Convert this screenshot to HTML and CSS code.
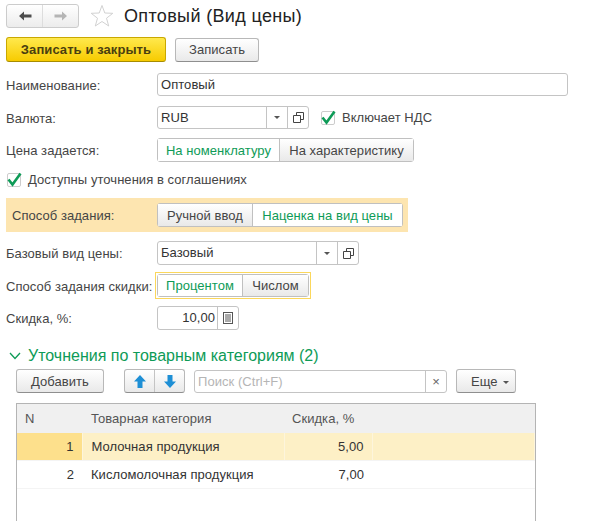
FILE: index.html
```html
<!DOCTYPE html>
<html lang="ru">
<head>
    <meta charset="UTF-8">
    <title>Оптовый (Вид цены)</title>
    <link rel="stylesheet" href="styles.css">
</head>
<body>

    <!-- Заголовок -->
    <header class="title-bar">
        <div class="nav-buttons">
            <button class="nav-btn">
                <svg width="14" height="10" viewBox="0 0 14 10"><path d="M6 0.5 L1 5 L6 9.5 V6.5 H13.5 V3.5 H6 Z" fill="#4d4d4d"/></svg>
            </button>
            <button class="nav-btn">
                <svg width="14" height="10" viewBox="0 0 14 10"><path d="M8 0.5 L13 5 L8 9.5 V6.5 H0.5 V3.5 H8 Z" fill="#b5b5b5"/></svg>
            </button>
        </div>
        <svg class="star" width="24" height="24" viewBox="0 0 24 24"><path d="M12 1.5 L14.8 9 L22.8 9.3 L16.5 14.2 L18.7 22 L12 17.5 L5.3 22 L7.5 14.2 L1.2 9.3 L9.2 9 Z" fill="#fff" stroke="#d2d2d2"/></svg>
        <h1>Оптовый (Вид цены)</h1>
    </header>

    <div class="command-bar">
        <button class="btn btn-primary">Записать и закрыть</button>
        <button class="btn btn-save">Записать</button>
    </div>

    <!-- Реквизиты -->
    <div class="row row-name">
        <label class="label">Наименование:</label>
        <div class="field field-name"><span class="field-text">Оптовый</span></div>
    </div>

    <div class="row row-currency">
        <label class="label">Валюта:</label>
        <div class="field field-currency">
            <span class="field-text">RUB</span>
            <span class="field-btn"><i class="caret"></i></span>
            <span class="field-btn">
                <svg width="11" height="11" viewBox="0 0 11 11"><path d="M3.5 3.5 V0.5 H10.5 V7.5 H7.5 M0.5 3.5 H7.5 V10.5 H0.5 Z" fill="none" stroke="#444"/></svg>
            </span>
        </div>
        <span class="check check-vat">
            <svg width="16" height="16" viewBox="0 0 16 16"><path d="M2.5 7.5 L6.5 12.5 L14.5 1.5" fill="none" stroke="#0e9b57" stroke-width="2.6"/></svg>
        </span>
        <span class="check-label">Включает НДС</span>
    </div>

    <div class="row row-price">
        <label class="label">Цена задается:</label>
        <div class="tumbler">
            <span class="tumbler-item active item-nom">На номенклатуру</span>
            <span class="tumbler-item item-char">На характеристику</span>
        </div>
    </div>

    <div class="row row-refine">
        <span class="check check-refine">
            <svg width="16" height="16" viewBox="0 0 16 16"><path d="M2.5 7.5 L6.5 12.5 L14.5 1.5" fill="none" stroke="#0e9b57" stroke-width="2.6"/></svg>
        </span>
        <span class="check-label">Доступны уточнения в соглашениях</span>
    </div>

    <div class="row row-method">
        <label class="label label-method">Способ задания:</label>
        <div class="tumbler">
            <span class="tumbler-item item-manual">Ручной ввод</span>
            <span class="tumbler-item active item-markup">Наценка на вид цены</span>
        </div>
    </div>

    <div class="row row-base">
        <label class="label">Базовый вид цены:</label>
        <div class="field field-base">
            <span class="field-text">Базовый</span>
            <span class="field-btn"><i class="caret"></i></span>
            <span class="field-btn">
                <svg width="11" height="11" viewBox="0 0 11 11"><path d="M3.5 3.5 V0.5 H10.5 V7.5 H7.5 M0.5 3.5 H7.5 V10.5 H0.5 Z" fill="none" stroke="#444"/></svg>
            </span>
        </div>
    </div>

    <div class="row row-discount-type">
        <label class="label">Способ задания скидки:</label>
        <div class="focus-frame">
            <div class="tumbler tumbler-small">
                <span class="tumbler-item active item-percent">Процентом</span>
                <span class="tumbler-item item-number">Числом</span>
            </div>
        </div>
    </div>

    <div class="row row-discount">
        <label class="label">Скидка, %:</label>
        <div class="field field-discount">
            <span class="field-text field-number">10,00</span>
            <span class="field-btn">
                <svg width="10" height="12" viewBox="0 0 10 12"><rect x="0.5" y="0.5" width="9" height="11" fill="#fff" stroke="#555"/><path d="M2 3 H8 M2 5 H8 M2 7 H8 M2 9 H8" stroke="#555"/></svg>
            </span>
        </div>
    </div>

    <!-- Уточнения -->
    <div class="group-title">
        <svg width="12" height="8" viewBox="0 0 12 8"><path d="M1 1 L6 6.5 L11 1" fill="none" stroke="#0e9b57" stroke-width="1.3"/></svg>
        <span>Уточнения по товарным категориям (2)</span>
    </div>

    <div class="table-bar">
        <button class="btn btn-add">Добавить</button>
        <div class="arrows">
            <button class="arrow-btn">
                <svg width="12" height="13" viewBox="0 0 12 13"><path d="M6 0 L12 6.5 H8.5 V13 H3.5 V6.5 H0 Z" fill="#1e8fd5"/></svg>
            </button>
            <button class="arrow-btn">
                <svg width="12" height="13" viewBox="0 0 12 13"><path d="M6 13 L12 6.5 H8.5 V0 H3.5 V6.5 H0 Z" fill="#1e8fd5"/></svg>
            </button>
        </div>
        <div class="search">
            <span class="search-text">Поиск (Ctrl+F)</span>
            <span class="search-clear">×</span>
        </div>
        <button class="btn btn-more">Еще <i class="caret"></i></button>
    </div>

    <div class="table-wrap">
        <table class="grid">
            <thead>
                <tr>
                    <th class="col-n">N</th>
                    <th class="col-cat">Товарная категория</th>
                    <th class="col-disc">Скидка, %</th>
                    <th></th>
                </tr>
            </thead>
            <tbody>
                <tr class="current">
                    <td class="num cell-mark">1</td>
                    <td class="cell-cat">Молочная продукция</td>
                    <td class="num">5,00</td>
                    <td></td>
                </tr>
                <tr>
                    <td class="num">2</td>
                    <td class="cell-cat">Кисломолочная продукция</td>
                    <td class="num">7,00</td>
                    <td></td>
                </tr>
            </tbody>
        </table>
    </div>

</body>
</html>
```

FILE: styles.css
```css
html, body {
    height: 521px;
    overflow: hidden;
}

body {
    font-family: 'Liberation Sans', Arial, sans-serif;
    font-size: 13px;
    letter-spacing: 0.05px;
    color: #454545;
    background-color: #fff;
    margin: 0;
    padding: 4px 0 0 6px;
    box-sizing: border-box;
}

button {
    font: inherit;
    letter-spacing: inherit;
    color: inherit;
    padding: 0;
}

/* Заголовок */
.title-bar {
    display: flex;
    align-items: center;
    height: 24px;
}

.title-bar h1 {
    margin: 0 0 0 10px;
    font-size: 18px;
    font-weight: normal;
    letter-spacing: 0.35px;
    color: #222;
}

.star {
    margin-left: 11px;
}

.nav-buttons {
    display: flex;
    width: 73px;
    height: 24px;
    box-sizing: border-box;
    border: 1px solid #ccc;
    border-radius: 3px;
    background: linear-gradient(#fff, #ececec);
}

.nav-btn {
    flex: 1;
    border: 0;
    background: none;
    display: flex;
    align-items: center;
    justify-content: center;
}

.nav-btn + .nav-btn {
    border-left: 1px solid #ddd;
}

/* Кнопки */
.btn {
    box-sizing: border-box;
    height: 24px;
    border: 1px solid #b8b8b8;
    border-bottom-color: #8f8f8f;
    border-radius: 3px;
    background: linear-gradient(#fff, #e9e9e9);
}

.command-bar {
    display: flex;
    align-items: center;
    gap: 9px;
    margin-top: 9px;
    height: 25px;
}

.btn-primary {
    width: 160px;
    height: 25px;
    font-weight: bold;
    letter-spacing: 0.08px;
    color: #4a3f10;
    border-color: #c9a800;
    border-bottom-color: #a78c00;
    background: linear-gradient(#ffe94d, #f7cb00);
}

.btn-save {
    width: 84px;
}

/* Строки формы */
.row {
    display: flex;
    align-items: center;
}

.label {
    width: 151px;
    flex-shrink: 0;
    padding-top: 1px;
}

.row-name {
    margin-top: 11px;
    height: 23px;
}

.row-currency {
    margin-top: 10px;
    height: 23px;
}

.row-price {
    margin-top: 9px;
    height: 24px;
}

.row-refine {
    margin-top: 10px;
    height: 15px;
    padding-left: 1px;
}

.row-method {
    margin-top: 11px;
    height: 34px;
    width: 402px;
    background-color: #fde5b0;
}

.label-method {
    padding-left: 6px;
    box-sizing: border-box;
}

.row-base {
    margin-top: 9px;
    height: 24px;
}

.row-discount-type {
    margin-top: 7px;
    height: 27px;
}

.row-discount {
    margin-top: 7px;
    height: 24px;
}

.label,
.check-label {
    white-space: nowrap;
}

/* Поля ввода */
.field {
    display: flex;
    height: 100%;
    box-sizing: border-box;
    border: 1px solid #c4c4c4;
    border-radius: 3px;
    background-color: #fff;
}

.field-text {
    flex: 1;
    padding-left: 3px;
    line-height: 22px;
    color: #333;
}

.field-number {
    text-align: right;
    padding-right: 2px;
    padding-left: 0;
}

.field-btn {
    width: 20px;
    border-left: 1px solid #c4c4c4;
    display: flex;
    align-items: center;
    justify-content: center;
}

.field-name {
    width: 411px;
}

.field-currency {
    width: 152px;
}

.field-base {
    width: 202px;
}

.field-discount {
    width: 82px;
}

.caret {
    display: inline-block;
    width: 0;
    height: 0;
    border-left: 3px solid transparent;
    border-right: 3px solid transparent;
    border-top: 3px solid #555;
}

/* Флажки */
.check {
    box-sizing: border-box;
    width: 14px;
    height: 14px;
    border: 1px solid #ccc;
    border-radius: 2px;
    display: flex;
    align-items: center;
    justify-content: center;
}

.check svg {
    flex-shrink: 0;
}

.check-vat {
    margin-left: 12px;
}

.check-label {
    margin-left: 7px;
}

/* Тумблеры */
.tumbler {
    display: flex;
    height: 24px;
    box-sizing: border-box;
    border: 1px solid #c0c0c0;
    border-radius: 3px;
    line-height: 23px;
}

.tumbler-item {
    box-sizing: border-box;
    text-align: center;
    white-space: nowrap;
    background: linear-gradient(#fff, #e9e9e9);
}

.tumbler-item + .tumbler-item {
    border-left: 1px solid #c0c0c0;
}

.tumbler-item.active {
    color: #0e9b57;
    background: #fff;
}

.item-nom {
    width: 121px;
}

.item-char {
    width: 134px;
}

.item-manual {
    width: 94px;
}

.item-markup {
    width: 150px;
}

.item-percent {
    width: 84px;
}

.item-number {
    width: 66px;
}

.focus-frame {
    box-sizing: border-box;
    height: 27px;
    width: 156px;
    margin-left: -2px;
    padding: 1px;
    border: 1px solid #fbd75b;
}

.tumbler-small {
    height: 23px;
    line-height: 22px;
}

/* Уточнения */
.group-title {
    display: flex;
    align-items: center;
    margin-top: 18px;
    padding-left: 3px;
    height: 16px;
    font-size: 16px;
    letter-spacing: 0;
    color: #0e9b57;
}

.group-title span {
    margin-left: 7px;
}

.table-bar {
    display: flex;
    align-items: center;
    margin: 5px 0 0 10px;
    height: 24px;
}

.btn-add {
    width: 88px;
}

.arrows {
    display: flex;
    width: 61px;
    height: 24px;
    margin-left: 20px;
    box-sizing: border-box;
    border: 1px solid #b8b8b8;
    border-bottom-color: #8f8f8f;
    border-radius: 3px;
    background: linear-gradient(#fff, #e9e9e9);
}

.arrow-btn {
    flex: 1;
    border: 0;
    background: none;
    display: flex;
    align-items: center;
    justify-content: center;
}

.arrow-btn + .arrow-btn {
    border-left: 1px solid #c4c4c4;
}

.search {
    display: flex;
    box-sizing: border-box;
    width: 253px;
    height: 23px;
    margin-left: 9px;
    border: 1px solid #c4c4c4;
    border-radius: 3px;
    line-height: 22px;
}

.search-text {
    flex: 1;
    padding-left: 3px;
    color: #b5b5b5;
}

.search-clear {
    width: 20px;
    text-align: center;
    border-left: 1px solid #c4c4c4;
    color: #666;
}

.btn-more {
    width: 60px;
    margin-left: 9px;
    padding-left: 14px;
    text-align: left;
}

.btn-more .caret {
    margin-left: 2px;
    vertical-align: middle;
}

/* Таблица */
.table-wrap {
    box-sizing: border-box;
    width: 520px;
    height: 130px;
    margin: 10px 0 0 10px;
    border: 1px solid #b4b4b4;
    border-bottom: 0;
}

.grid {
    width: 100%;
    border-collapse: collapse;
    table-layout: fixed;
}

.grid th {
    height: 29px;
    padding: 0 8px;
    font-weight: normal;
    text-align: left;
    background-color: #f0f0f0;
    color: #555;
}

.grid td {
    height: 27px;
    padding: 0 8px;
    color: #333;
    border-bottom: 1px solid #f4f4f4;
}

.col-n {
    width: 65px;
    box-sizing: border-box;
}

.grid .col-cat,
.grid .cell-cat {
    padding-left: 9px;
}

.col-cat {
    width: 202px;
    box-sizing: border-box;
}

.col-disc {
    width: 88px;
    box-sizing: border-box;
}

.grid .num {
    text-align: right;
}

.current td {
    background-color: #fdf0c6;
    border-right: 1px solid #fdf5dc;
}

.current .cell-mark {
    background-color: #fde08c;
}
```
